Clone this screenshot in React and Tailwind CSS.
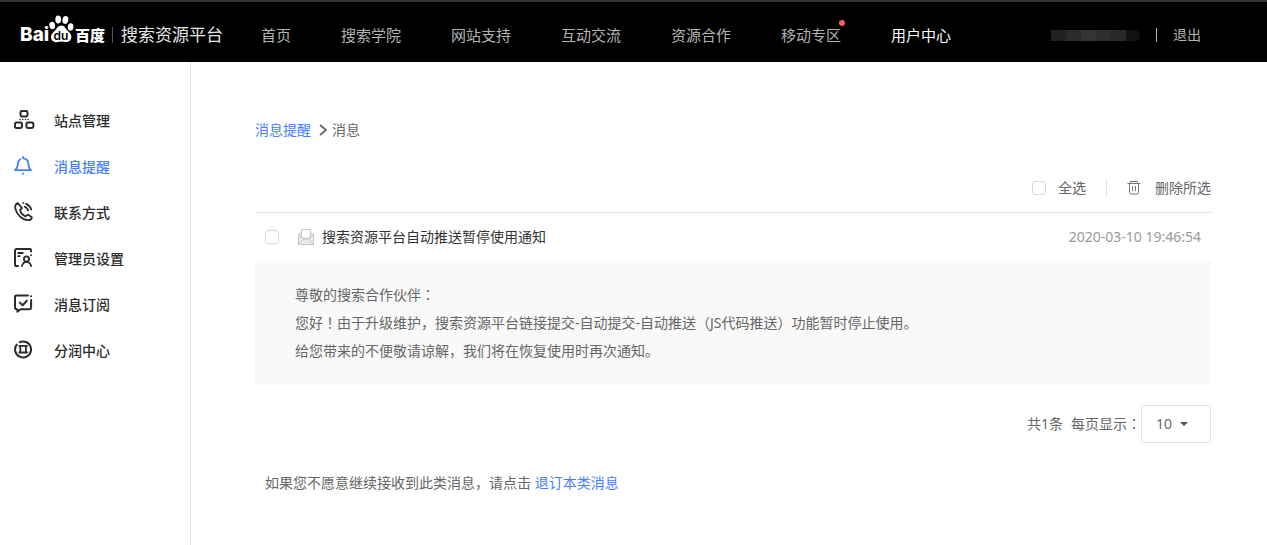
import clsx from 'clsx';

const NAV_ITEMS = [
  { label: '首页' },
  { label: '搜索学院' },
  { label: '网站支持' },
  { label: '互动交流' },
  { label: '资源合作' },
  { label: '移动专区', hasDot: true },
  { label: '用户中心', active: true },
];

const SIDE_ITEMS = [
  { label: '站点管理', icon: SiteIcon },
  { label: '消息提醒', icon: BellIcon, active: true },
  { label: '联系方式', icon: PhoneIcon },
  { label: '管理员设置', icon: AdminIcon },
  { label: '消息订阅', icon: SubscribeIcon },
  { label: '分润中心', icon: CoinIcon },
];

function Icon({ children }) {
  return (
    <svg
      width="22"
      height="22"
      viewBox="0 0 22 22"
      fill="none"
      stroke="currentColor"
      strokeWidth="2"
      strokeLinecap="round"
      strokeLinejoin="round"
      className="-mt-[2px] shrink-0"
      aria-hidden="true"
    >
      {children}
    </svg>
  );
}

function SiteIcon() {
  return (
    <Icon>
      <rect x="6.500" y="2" width="7" height="5.400" rx="1.400" />
      <rect x="1" y="13.500" width="7" height="5.400" rx="1.400" />
      <rect x="12.400" y="13.500" width="7" height="5.400" rx="1.400" />
      <path d="M6 10.500h.1M8.700 10.500h.1M11.400 10.500h.1M14.100 10.500h.1" strokeWidth="1.500" />
    </Icon>
  );
}

function BellIcon() {
  return (
    <Icon>
      <path d="M9 2v1.200M10.200 3.700c2.600.5 4.200 2.300 4.200 5.100 0 3.300.6 4.900 2.600 6.400H1c2-1.500 2.800-3.100 2.800-6.400 0-2.200.9-3.700 2.600-4.600" strokeWidth="1.800" />
      <path d="M9 18.800h.1" />
    </Icon>
  );
}

function PhoneIcon() {
  return (
    <Icon>
      <path d="M3.800 2C1.700 2.900.8 5 1.400 7.700c.7 3 2.300 5.700 4.700 8 2.400 2.200 5.200 3.600 7.900 3.500 2-.1 3.600-1.200 3.800-2.900l-4-2.700-2.200 1.800C8.700 14.200 6.700 11.700 6 9l2-1.900z" strokeWidth="1.800" />
      <path d="M9.300 1.900h.1M12.100 2.800c2.600 1.100 4.400 3 5.200 5.700M10.700 5.700c1.700.7 2.900 1.900 3.500 3.700" strokeWidth="1.800" />
    </Icon>
  );
}

function AdminIcon() {
  return (
    <Icon>
      <path d="M4 19H2.600A1.600 1.600 0 0 1 1 17.400V3.600A1.600 1.600 0 0 1 2.600 2h13.200A1.200 1.200 0 0 1 17 3.200V4.500" />
      <path d="M17 8.200h.1M4.200 6h4.600M4.200 9.200h1.400" strokeWidth="1.800" />
      <circle cx="12.500" cy="12" r="2.600" strokeWidth="1.800" />
      <path d="M8 19c.5-2.400 2-3.900 4.500-4.200 2.600.3 4.100 1.800 4.600 4.200" strokeWidth="1.800" />
    </Icon>
  );
}

function SubscribeIcon() {
  return (
    <Icon>
      <path d="M14 2.600H2.400A1.400 1.400 0 0 0 1 4v10.800a1.400 1.400 0 0 0 1.400 1.400h1v2.600l3.300-2.600h9a1.400 1.400 0 0 0 1.400-1.400V7" />
      <path d="M17 3.200h.1M5.800 9.600l2.800 2.700 4.200-4.500" />
    </Icon>
  );
}

function CoinIcon() {
  return (
    <Icon>
      <path d="M2.700 5.600A8 8 0 1 0 9 2.400c-1.200 0-2.300.3-3.200.7" />
      <path d="M5.200 6.800h7.800M5.200 13.500h7.800M6.300 6.800v6.700M11.900 6.800v6.700" strokeWidth="1.800" />
    </Icon>
  );
}

function TrashIcon() {
  return (
    <svg width="14" height="16" viewBox="0 0 14 16" fill="none" stroke="#777" strokeWidth="1" aria-hidden="true">
      <path d="M.5 3.500h13M3.500 3.500v-2h7v2M2.500 3.500v9a1.500 1.500 0 0 0 1.500 1.500h6a1.500 1.500 0 0 0 1.500-1.500v-9M5.500 6v5M8.500 6v5" />
    </svg>
  );
}

function MailIcon() {
  return (
    <svg width="16" height="16" viewBox="0 0 16 16" fill="none" stroke="#c4c4c4" aria-hidden="true">
      <path d="M.5 5.500v10h15v-10L13 4H3z" fill="#ececec" />
      <path d="M3.500.5h9v7L10 9.500H6L3.500 7.500z" fill="#fff" />
      <path d="M.5 6l5 4h5l5-4M.5 15.500l5-5.500M15.500 15.500l-5-5.500" />
    </svg>
  );
}

function Paw() {
  return (
    <svg width="27" height="29" viewBox="0 0 27 29" fill="#fff" aria-hidden="true">
      <ellipse cx="4.200" cy="10.500" rx="2.900" ry="3.700" transform="rotate(-12 4.200 10.500)" />
      <ellipse cx="10.200" cy="4.600" rx="2.900" ry="4" />
      <ellipse cx="17.400" cy="4.900" rx="2.900" ry="4" transform="rotate(10 17.400 4.900)" />
      <ellipse cx="22.600" cy="11.900" rx="2.800" ry="3.700" transform="rotate(10 22.600 11.900)" />
      <path d="M13.200 10.500c2.700 0 3.900 2.200 5.500 4.200 1.700 2 4.900 3.800 4.700 7.400-.2 3.400-2.800 5.200-5.500 5-1.600-.1-3.100-.5-4.700-.5s-3.200.5-4.800.6c-2.900.1-5.300-1.700-5.400-5.100-.1-3.500 3.100-5.200 4.700-7.300 1.500-2.100 2.800-4.300 5.500-4.300z" />
      <text x="13" y="25" textAnchor="middle" fill="#000" fontFamily="Inter, sans-serif" fontSize="12" fontWeight="600">du</text>
    </svg>
  );
}

function Logo() {
  return (
    <a href="#" className="flex items-center whitespace-nowrap text-white">
      <span className="w-7 font-['Inter'] text-[19px] leading-5 font-extrabold">Bai</span>
      <span className="-mt-3"><Paw /></span>
      <span className="text-[15px] leading-5 font-black">百度</span>
      <span className="mr-2 ml-[7px] h-4 w-px bg-[#555]" />
      <span className="text-[17px] leading-5 text-[#e6e6e6]">搜索资源平台</span>
    </a>
  );
}

// The account name stays masked
function MaskedName() {
  return (
    <span className="flex h-[11px] overflow-hidden rounded-r-full">
      <span className="w-[15px] bg-[#202122]" />
      <span className="w-[15px] bg-[#2b2a2c]" />
      <span className="w-[15px] bg-[#353535]" />
      <span className="w-[15px] bg-[#2e2e2e]" />
      <span className="w-[15px] bg-[#29292b]" />
      <span className="w-[14px] bg-[#12110d]" />
    </span>
  );
}

function Header() {
  return (
    <header className="flex h-[62px] items-center border-t-2 border-[#2e3338] bg-black pt-[6px] pr-[66px] pl-5">
      <Logo />
      <nav className="ml-[38px] flex gap-[50px] text-[15px] leading-5 whitespace-nowrap text-[#b3b3b3]">
        {NAV_ITEMS.map((item) => (
          <a key={item.label} href="#" className={clsx('relative', item.active && 'text-white')}>
            {item.label}
            {item.hasDot && <span className="absolute -top-[5px] -right-1 size-[6px] rounded-full bg-[#ff5b5b]" />}
          </a>
        ))}
      </nav>
      <div className="ml-auto flex items-center gap-4 text-sm leading-5 whitespace-nowrap text-[#b3b3b3]">
        <MaskedName />
        <span className="h-[14px] w-px bg-[#b3b3b3]" />
        <a href="#">退出</a>
      </div>
    </header>
  );
}

function Sidebar() {
  return (
    <aside className="w-[191px] shrink-0 border-r border-[#e6e6e6] pt-9">
      <ul>
        {SIDE_ITEMS.map((item) => (
          <li key={item.label}>
            <a
              href="#"
              className={clsx(
                'flex h-[46px] items-center gap-[18px] pl-[14px] text-sm font-medium',
                item.active ? 'text-[#4581ff]' : 'text-[#2b2b2b]'
              )}
            >
              <item.icon />
              {item.label}
            </a>
          </li>
        ))}
      </ul>
    </aside>
  );
}

function Checkbox(props) {
  return (
    <input
      type="checkbox"
      className="size-[14px] shrink-0 appearance-none rounded-[3px] border border-[#d9d9d9] bg-white checked:bg-[#4581ff]"
      {...props}
    />
  );
}

// Full-width mark that sits in the middle of its cell
function Mark({ children }) {
  return <span className="font-['Noto_Sans_CJK_JP'] leading-none">{children}</span>;
}

function MessageList() {
  return (
    <section>
      <div className="box-content flex h-12 items-center justify-end border-b border-[#e0e0e0]">
        <label className="flex items-center gap-3">
          <Checkbox />
          全选
        </label>
        <span className="mx-5 h-[18px] w-px bg-[#e0e0e0]" />
        <button type="button" className="flex items-center gap-[14px]">
          <TrashIcon />
          删除所选
        </button>
      </div>
      <div className="flex h-12 items-center px-[10px]">
        <Checkbox id="message" />
        <label htmlFor="message" className="ml-[19px] flex items-center gap-2 text-[#333]">
          <MailIcon />
          搜索资源平台自动推送暂停使用通知
        </label>
        <time className="ml-auto text-[#999]">2020-03-10 19:46:54</time>
      </div>
      <div className="bg-[#f9f9f9] px-10 py-5 leading-7">
        <p>尊敬的搜索合作伙伴<Mark>：</Mark></p>
        <p>您好<Mark>！</Mark>由于升级维护，搜索资源平台链接提交-自动提交-自动推送（JS代码推送）功能暂时停止使用。</p>
        <p>给您带来的不便敬请谅解，我们将在恢复使用时再次通知。</p>
      </div>
    </section>
  );
}

function Pagination() {
  return (
    <div className="mt-5 flex items-center justify-end">
      <span className="mr-2">共1条</span>
      <label htmlFor="page-size">每页显示<Mark>：</Mark></label>
      <div className="relative">
        <select
          id="page-size"
          defaultValue="10"
          className="block h-[38px] w-[70px] appearance-none rounded-[3px] border border-[#e0e0e0] bg-white pl-[14px]"
        >
          <option>10</option>
          <option>20</option>
          <option>50</option>
        </select>
        <svg width="8" height="4" viewBox="0 0 8 4" className="pointer-events-none absolute top-[17px] right-[23px]" aria-hidden="true">
          <path d="M0 0h8L4 4z" fill="#555" />
        </svg>
      </div>
    </div>
  );
}

export default function App() {
  return (
    <div className="flex min-h-screen flex-col bg-white font-['Noto_Sans','Noto_Sans_CJK_SC',sans-serif] text-sm text-[#666]">
      <Header />
      <div className="flex flex-1">
        <Sidebar />
        <main className="min-w-0 flex-1 pt-[54px] pr-14 pl-16">
          <div className="mb-5 flex h-7 items-center">
            <a href="#" className="text-[#4581ff]">消息提醒</a>
            <svg width="9" height="12" viewBox="0 0 9 12" className="mr-1 ml-2" aria-hidden="true">
              <path d="M1 1l6 5-6 5" fill="none" stroke="#666" strokeWidth="1.800" />
            </svg>
            <span>消息</span>
          </div>
          <MessageList />
          <Pagination />
          <p className="mt-[26px] px-[10px] leading-7">
            如果您不愿意继续接收到此类消息，请点击 <a href="#" className="text-[#4581ff]">退订本类消息</a>
          </p>
        </main>
      </div>
    </div>
  );
}
